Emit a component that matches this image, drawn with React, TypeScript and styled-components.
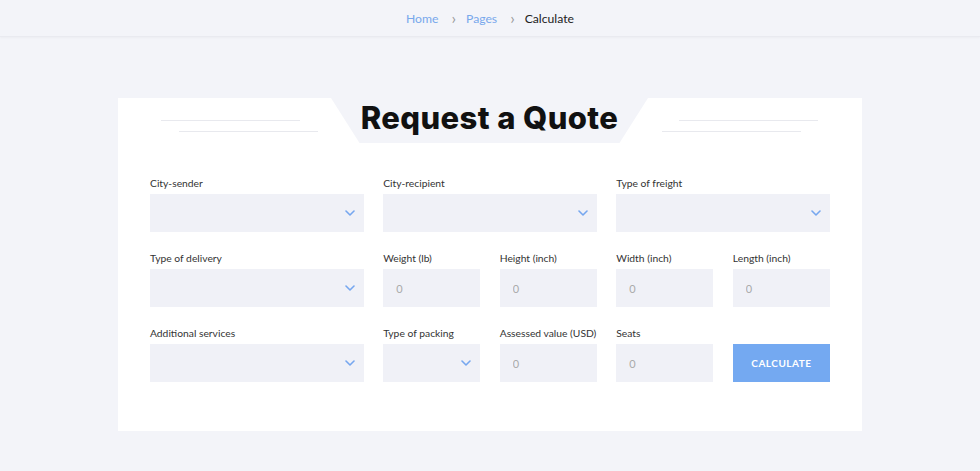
import styled, { createGlobalStyle } from 'styled-components';

const GlobalStyle = createGlobalStyle`
  * { box-sizing: border-box; }
  body {
    margin: 0;
    background: #f3f4f9;
    font-family: Lato, 'Open Sans', sans-serif;
    color: #333;
  }
`;

type Field = {
  label: string;
  kind: 'select' | 'input';
  span: number;
};

const rows: Field[][] = [
  [
    { label: 'City-sender', kind: 'select', span: 2 },
    { label: 'City-recipient', kind: 'select', span: 2 },
    { label: 'Type of freight', kind: 'select', span: 2 },
  ],
  [
    { label: 'Type of delivery', kind: 'select', span: 2 },
    { label: 'Weight (lb)', kind: 'input', span: 1 },
    { label: 'Height (inch)', kind: 'input', span: 1 },
    { label: 'Width (inch)', kind: 'input', span: 1 },
    { label: 'Length (inch)', kind: 'input', span: 1 },
  ],
  [
    { label: 'Additional services', kind: 'select', span: 2 },
    { label: 'Type of packing', kind: 'select', span: 1 },
    { label: 'Assessed value (USD)', kind: 'input', span: 1 },
    { label: 'Seats', kind: 'input', span: 1 },
  ],
];

const Chevron = () => (
  <svg width="10" height="6" viewBox="0 0 10 6" fill="none">
    <path d="M1 1l4 4 4-4" stroke="#76a7ef" strokeWidth="1.6" strokeLinecap="round" strokeLinejoin="round" />
  </svg>
);

const App = () => {
  return (
    <>
      <GlobalStyle />
      <S.Header>
        <S.Crumb href="#">Home</S.Crumb>
        <S.Sep>›</S.Sep>
        <S.Crumb href="#">Pages</S.Crumb>
        <S.Sep>›</S.Sep>
        <S.Current>Calculate</S.Current>
      </S.Header>
      <S.Main>
        <S.Card>
          <S.TitleRow>
            <S.Lines side="left">
              <S.Line offset={0} />
              <S.Line offset={18} />
            </S.Lines>
            <S.TitleTab>
              <S.Title>Request a Quote</S.Title>
            </S.TitleTab>
            <S.Lines side="right">
              <S.Line offset={17} />
              <S.Line offset={0} />
            </S.Lines>
          </S.TitleRow>
          <S.Form>
            {rows.flat().map((field) => (
              <S.Group key={field.label} span={field.span}>
                <S.Label>{field.label}</S.Label>
                {field.kind === 'select' ? (
                  <S.Select>
                    <Chevron />
                  </S.Select>
                ) : (
                  <S.Input placeholder="0" />
                )}
              </S.Group>
            ))}
            <S.ButtonCell>
              <S.Button>Calculate</S.Button>
            </S.ButtonCell>
          </S.Form>
        </S.Card>
      </S.Main>
    </>
  );
};

const S = {
  Header: styled.header`
    display: flex;
    justify-content: center;
    align-items: center;
    height: 37px;
    border-bottom: 1px solid #e9eaf0;
    box-shadow: 0 1px 2px rgba(0, 0, 0, 0.03);
    font-size: 12.2px;
  `,

  Crumb: styled.a`
    color: #78a8ec;
    text-decoration: none;
  `,

  Sep: styled.span`
    color: #999;
    font-size: 16px;
    margin: 0 10px 2px 13px;
  `,

  Current: styled.span`
    color: #222;
  `,

  Main: styled.main`
    display: flex;
    justify-content: center;
    padding: 61px 0 40px 0;
  `,

  Card: styled.section`
    width: 744px;
    background: #fff;
    padding: 0 32px 49px;
  `,

  TitleRow: styled.div`
    display: flex;
    align-items: flex-start;
    margin: 0 -32px;
  `,

  Lines: styled.div<{ side: 'left' | 'right' }>`
    display: flex;
    flex-direction: column;
    gap: 10px;
    width: 157px;
    flex-shrink: 0;
    margin-top: 22px;
    margin-left: ${(p) => (p.side === 'left' ? 43 : 14)}px;
    margin-right: ${(p) => (p.side === 'left' ? 13 : 0)}px;
  `,

  Line: styled.div<{ offset: number }>`
    width: 139px;
    height: 1px;
    margin-left: ${(p) => p.offset}px;
    background: #e8e9ee;
  `,

  TitleTab: styled.div`
    position: relative;
    flex-shrink: 0;
    display: flex;
    justify-content: center;
    align-items: center;
    width: 317px;
    height: 45px;
    &::before {
      content: '';
      position: absolute;
      inset: 0;
      background: #f3f4f9;
      clip-path: polygon(0 0, 100% 0, 91% 100%, 9% 100%);
    }
  `,

  Title: styled.h1`
    position: relative;
    margin: -7px 0 0;
    font-family: Inter, 'DejaVu Sans', sans-serif;
    font-weight: 800;
    font-size: 31px;
    letter-spacing: 0.4px;
    color: #111;
    white-space: nowrap;
  `,

  Form: styled.div`
    display: grid;
    grid-template-columns: repeat(6, minmax(0, 1fr));
    column-gap: 19.4px;
    row-gap: 19px;
    margin-top: 33px;
  `,

  Group: styled.div<{ span: number }>`
    display: flex;
    flex-direction: column;
    gap: 4px;
    min-width: 0;
    grid-column: span ${(p) => p.span};
  `,

  Label: styled.label`
    font-size: 10.3px;
    line-height: 14px;
    color: #333;
    white-space: nowrap;
  `,

  Select: styled.div`
    display: flex;
    align-items: center;
    justify-content: flex-end;
    height: 38px;
    padding-right: 9px;
    background: #f0f1f7;
  `,

  Input: styled.input`
    width: 100%;
    min-width: 0;
    height: 38px;
    border: none;
    outline: none;
    padding: 0 13px;
    background: #f0f1f7;
    font-family: Lato, sans-serif;
    font-size: 11px;
    color: #333;
    &::placeholder {
      color: #aaa;
    }
  `,

  ButtonCell: styled.div`
    display: flex;
    align-items: flex-end;
  `,

  Button: styled.button`
    width: 100%;
    height: 38px;
    border: none;
    background: #74a9f1;
    color: #fff;
    font-family: Lato, sans-serif;
    font-weight: 700;
    font-size: 10px;
    letter-spacing: 0.5px;
    text-transform: uppercase;
    cursor: pointer;
  `,
};

export default App;
